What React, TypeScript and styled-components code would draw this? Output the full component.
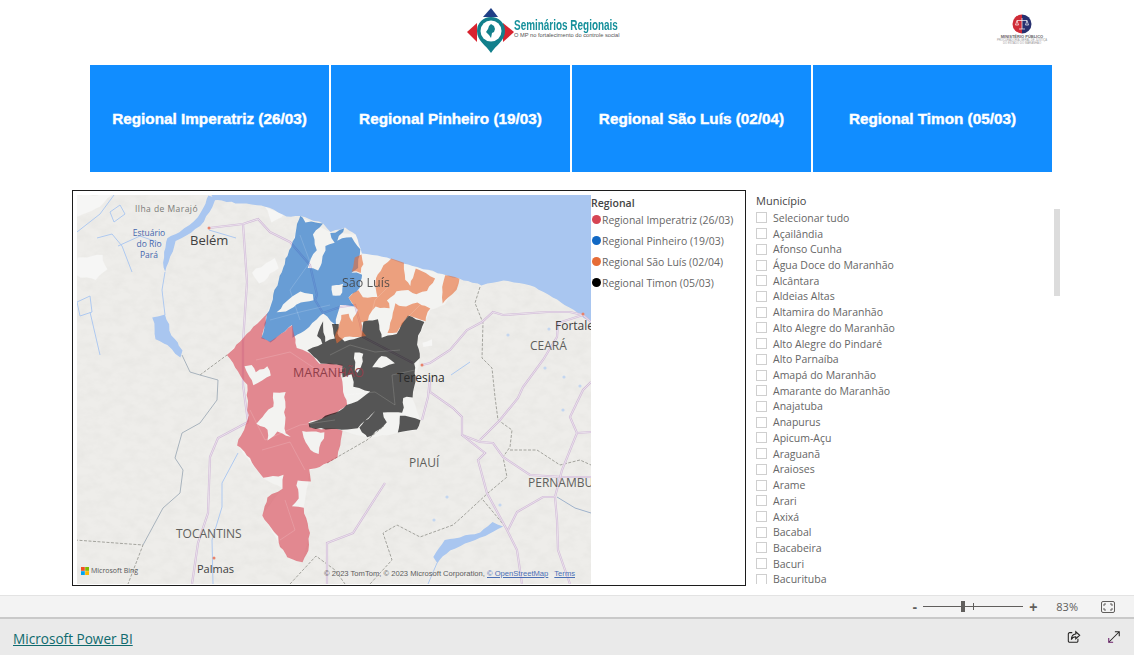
import React from 'react'
import styled, { createGlobalStyle } from 'styled-components'

const GlobalStyle = createGlobalStyle`
  html, body {
    margin: 0;
    padding: 0;
    background: #fff;
    font-family: "Open Sans", "Noto Sans", sans-serif;
  }
`

const Page = styled.div`
  width: 1134px;
  height: 655px;
  overflow: hidden;
  display: flex;
  flex-direction: column;
`

const Header = styled.header`
  height: 65px;
  display: flex;
  align-items: flex-start;
  padding-left: 466px;
  box-sizing: border-box;
`

const LogoBlock = styled.div`
  width: 154px;
  height: 50px;
  margin-top: 7px;
  display: flex;
  align-items: flex-start;

  & > svg {
    flex-shrink: 0;
  }
`

const LogoWords = styled.div`
  margin-top: 11px;
  display: flex;
  flex-direction: column;
`

const LogoTitle = styled.span`
  font-family: "Liberation Sans", sans-serif;
  font-size: 14px;
  font-weight: 700;
  line-height: 14px;
  color: #16909b;
  white-space: nowrap;
  transform: scaleX(0.71);
  transform-origin: left center;
`

const LogoSub = styled.span`
  font-family: "Liberation Sans", sans-serif;
  font-size: 5.7px;
  line-height: 7px;
  color: #555;
  white-space: nowrap;
`

const SealBlock = styled.div`
  width: 48px;
  margin: 14px 0 0 378px;
  display: flex;
  flex-direction: column;
  align-items: center;
`

const SealName = styled.span`
  font-family: "Liberation Sans", sans-serif;
  font-size: 4px;
  font-weight: 700;
  line-height: 5px;
  color: #666;
  white-space: nowrap;
`

const SealSmall = styled.span`
  font-family: "Liberation Sans", sans-serif;
  font-size: 2.8px;
  line-height: 3.3px;
  color: #999;
  white-space: nowrap;
`

const TabRow = styled.nav`
  margin-left: 90px;
  width: 962px;
  height: 107px;
  display: grid;
  grid-template-columns: repeat(4, 1fr);
  gap: 2px;
`

const TabButton = styled.button`
  border: 0;
  padding: 0;
  background: #118dff;
  color: #fff;
  font-family: "Liberation Sans", sans-serif;
  font-size: 15.3px;
  font-weight: 700;
  -webkit-text-stroke: 0.4px #fff;
`

const Main = styled.main`
  margin: 18px 0 0 72px;
  height: 396px;
  display: flex;
`

const MapVisual = styled.section`
  width: 674px;
  height: 396px;
  box-sizing: border-box;
  border: 1px solid #1c1c1c;
  padding: 4px 0 1px 4px;
  display: flex;
`

const MapFrame = styled.div`
  position: relative;
  width: 514px;
  height: 389px;
  overflow: hidden;
  background: #eeedea;
`

const MapSvg = styled.svg`
  display: block;
  width: 514px;
  height: 389px;
`

const MapLabel = styled.text<{ $size: number; $color: string; $spacing?: number }>`
  font-family: "Open Sans", sans-serif;
  font-size: ${(p) => p.$size}px;
  fill: ${(p) => p.$color};
  letter-spacing: ${(p) => p.$spacing ?? 0}px;
`

const BingMark = styled.div`
  position: absolute;
  left: 4px;
  bottom: 9px;
  display: flex;
  align-items: center;
  gap: 2px;
  font-family: "Open Sans", sans-serif;
  font-size: 7px;
  color: #555;
`

const Attribution = styled.div`
  position: absolute;
  left: 247px;
  bottom: 6px;
  display: flex;
  gap: 6px;
  font-family: "Liberation Sans", sans-serif;
  font-size: 7.6px;
  color: #5c5c5c;
  white-space: nowrap;

  & a {
    color: #4a6fb5;
    text-decoration: underline;
  }
`

const Legend = styled.div`
  display: flex;
  flex-direction: column;
`

const LegendTitle = styled.div`
  margin-top: 1px;
  height: 13px;
  font-size: 10.5px;
  font-weight: 600;
  line-height: 15px;
  color: #444;
`

const LegendItem = styled.div`
  height: 21px;
  display: flex;
  align-items: center;
  gap: 1px;
  font-size: 10.45px;
  color: #666;
  white-space: nowrap;
`

const LegendDot = styled.span<{ $color: string }>`
  width: 9px;
  height: 9px;
  margin-left: 1px;
  border-radius: 50%;
  background: ${(p) => p.$color};
`

const Slicer = styled.aside`
  margin-left: 10px;
  width: 308px;
  height: 394px;
  display: flex;
  flex-direction: column;
`

const SlicerTitle = styled.div`
  height: 20px;
  font-size: 11px;
  line-height: 22px;
  color: #444;
`

const SlicerBody = styled.div`
  flex: 1;
  min-height: 0;
  display: flex;
  justify-content: space-between;
`

const SlicerList = styled.div`
  flex: 1;
  overflow: hidden;
`

const SlicerRow = styled.div`
  height: 15.72px;
  display: flex;
  align-items: center;
  gap: 6px;
  font-size: 10.5px;
  color: #666;
  white-space: nowrap;
`

const Check = styled.span`
  width: 11px;
  height: 11px;
  box-sizing: border-box;
  border: 1px solid #cfcfcf;
  background: #fff;
`

const ScrollThumb = styled.div`
  width: 6px;
  height: 87px;
  margin-right: 4px;
  margin-top: -1px;
  background: #dcdcdc;
`

const ZoomBar = styled.div`
  margin-top: 9px;
  height: 24px;
  box-sizing: border-box;
  background: #f3f3f3;
  border-top: 1px solid #e3e3e3;
  border-bottom: 2px solid #c9c9c9;
  display: flex;
  align-items: center;
  justify-content: flex-end;
  padding-right: 19px;
  color: #605e5c;
`

const ZoomSign = styled.span`
  font-family: "Liberation Sans", sans-serif;
  font-size: 14px;
  line-height: 14px;
  font-weight: 700;
`

const ZoomTrack = styled.div`
  position: relative;
  width: 100px;
  height: 1px;
  margin: 0 6px;
  background: #605e5c;
`

const ZoomThumb = styled.span`
  position: absolute;
  left: 38px;
  top: -5px;
  width: 4px;
  height: 11px;
  background: #605e5c;
`

const ZoomTick = styled.span`
  position: absolute;
  left: 50px;
  top: -3px;
  width: 1px;
  height: 7px;
  background: #605e5c;
`

const ZoomValue = styled.span`
  margin: 0 23px 0 19px;
  font-size: 11px;
  color: #605e5c;
`

const Footer = styled.footer`
  flex: 1;
  background: #eaeaea;
  display: flex;
  align-items: center;
  padding: 0 13px;
  gap: 26px;
`

const BrandLink = styled.a`
  margin-right: auto;
  padding-top: 2px;
  font-size: 13.6px;
  color: #0f6a6e;
  text-decoration: underline;
`

const FooterIcon = styled.svg`
  display: block;
  width: 14px;
  height: 14px;
  fill: none;
  stroke-width: 1.2;
`

type Pt = [number, number]

// walks each edge in short steps with a small seeded jitter, so the outlines are not straight
const rough = (pts: Pt[], seed = 1, amp = 0.9): Pt[] => {
  let s = seed * 7919
  const rnd = () => {
    s = (s * 16807) % 2147483647
    return (s % 1000) / 1000 - 0.5
  }
  const out: Pt[] = []
  pts.forEach((a, i) => {
    const b = pts[(i + 1) % pts.length]
    const steps = Math.max(1, Math.round(Math.hypot(b[0] - a[0], b[1] - a[1]) / 5))
    for (let k = 0; k < steps; k++) {
      const t = k / steps
      out.push([a[0] + (b[0] - a[0]) * t + rnd() * amp * 2, a[1] + (b[1] - a[1]) * t + rnd() * amp * 2])
    }
  })
  return out
}

const toPoints = (pts: Pt[]) => pts.map((p) => `${p[0].toFixed(1)},${p[1].toFixed(1)}`).join(' ')
const toPath = (pts: Pt[]) => `M${toPoints(pts).replace(/ /g, ' L')}Z`
const toShape = (outer: Pt[], holes: Pt[][], seed: number) =>
  [outer, ...holes].map((p, i) => toPath(rough(p, seed + i))).join(' ')

const SEA: Pt[] = [
  [208, 188], [600, 188], [600, 330], [591, 323], [577, 312], [553, 297], [530, 285], [503, 280], [482, 285], [463, 280],
  [452, 277], [403, 263], [392, 259], [362, 253], [356, 235], [345, 228], [330, 232], [323, 223], [300, 216], [287, 217],
  [270, 208], [257, 205], [236, 203], [222, 201], [214, 200],
]

const ESTUARY: Pt[] = [
  [208, 195], [216, 198], [210, 212], [200, 226], [186, 236], [176, 241], [169, 262], [165, 272], [163, 262], [167, 238],
  [180, 232], [194, 222], [204, 208],
]

const LAKE_NORTH: Pt[] = [[153, 318], [165, 315], [172, 335], [182, 350], [180, 357], [168, 345], [156, 340]]
const LAKE_SOUTH: Pt[] = [[433, 557], [445, 540], [480, 533], [492, 522], [503, 527], [480, 538], [450, 550], [437, 563]]

const STATE: Pt[] = [
  [300, 216], [330, 232], [356, 235], [403, 263], [452, 277], [460, 279], [445, 305], [430, 310], [425, 322], [417, 340],
  [420, 358], [415, 382], [412, 397], [420, 420], [417, 430], [368, 438], [342, 430], [338, 457], [320, 467], [310, 470],
  [303, 513], [310, 533], [302, 562], [288, 558], [262, 515], [282, 488], [263, 478], [237, 445], [248, 420], [247, 385],
  [227, 355], [267, 313], [293, 242],
]

const PINHEIRO: Pt[] = [
  [300, 215], [306, 222], [323, 223], [313, 234], [316, 250], [307, 268], [318, 270], [322, 262], [326, 246], [334, 243],
  [330, 234], [345, 229], [337, 240], [352, 237], [360, 250], [358, 268], [352, 272], [362, 274], [360, 288], [348, 297],
  [354, 306], [340, 305], [335, 325], [323, 313], [305, 331], [293, 337], [292, 325], [270, 342], [262, 338], [267, 315],
  [277, 285], [283, 268], [293, 242],
]

const PINHEIRO_HOLES: Pt[][] = [
  [[277, 312], [287, 300], [300, 292], [313, 295], [313, 300], [300, 302], [290, 310]],
  [[331, 285], [344, 284], [340, 296], [332, 295]],
]

const IMPERATRIZ: Pt[] = [
  [267, 313], [262, 338], [270, 342], [292, 325], [297, 348], [307, 351], [320, 363], [342, 365], [342, 382], [347, 405],
  [335, 413], [308, 423], [310, 428], [342, 430], [338, 457], [320, 467], [310, 470], [310, 482], [297, 480], [298, 498],
  [292, 507], [303, 508], [310, 533], [308, 550], [302, 562], [288, 558], [278, 543], [278, 537], [262, 515], [268, 497],
  [282, 488], [283, 475], [263, 478], [247, 455], [237, 445], [248, 420], [247, 385], [227, 355],
]

const IMPERATRIZ_HOLES: Pt[][] = [
  [[273, 392], [285, 392], [285, 433], [290, 437], [278, 432], [268, 440], [268, 430], [257, 423], [265, 413], [273, 407]],
  [[302, 431], [325, 433], [318, 453], [310, 450], [303, 438]],
  [[245, 367], [252, 365], [255, 372], [268, 367], [270, 375], [253, 385]],
]

const TIMON: Pt[] = [
  [307, 350], [323, 343], [317, 337], [323, 322], [325, 342], [335, 338], [332, 325], [339, 324], [338, 337], [345, 342],
  [362, 337], [363, 322], [378, 320], [382, 338], [397, 333], [408, 315], [425, 322], [417, 340], [420, 358], [415, 363],
  [415, 382], [412, 397], [403, 398], [403, 413], [383, 412], [386, 423], [368, 438], [359, 428], [375, 412], [357, 428],
  [342, 430], [310, 428], [308, 423], [335, 413], [347, 405], [357, 402], [370, 392], [354, 387], [352, 375], [343, 377],
  [342, 365], [320, 363],
]

const TIMON_PIECE: Pt[] = [[400, 415], [420, 420], [417, 430], [398, 433]]

const TIMON_HOLES: Pt[][] = [
  [[355, 353], [363, 353], [362, 362], [358, 372], [354, 371]],
  [[378, 358], [386, 356], [394, 363], [382, 369], [372, 367]],
]

const SAO_LUIS: Pt[][] = [
  [[352, 272], [355, 257], [362, 255], [363, 265], [360, 272]],
  [[387, 262], [392, 259], [403, 263], [405, 280], [410, 286], [415, 268], [435, 278], [427, 290], [417, 295], [408, 290],
    [397, 292], [387, 300], [390, 308], [375, 307], [367, 320], [362, 322], [362, 330], [367, 335], [363, 337], [345, 336],
    [337, 343], [335, 337], [342, 315], [348, 313], [352, 322], [358, 310], [348, 297], [358, 290], [363, 297], [377, 297],
    [375, 283], [380, 270]],
  [[445, 276], [460, 278], [457, 290], [448, 297], [443, 303], [442, 293]],
  [[388, 333], [395, 303], [402, 307], [417, 303], [430, 308], [425, 321], [408, 315], [397, 333]],
]

const LAND_WHITE: Pt[][] = [
  [[77, 258], [102, 255], [107, 270], [95, 280], [77, 276]],
  [[252, 272], [275, 258], [278, 268], [260, 284]],
  [[265, 206], [285, 214], [272, 222]],
  [[422, 342], [432, 340], [432, 346], [424, 347]],
  [[77, 195], [112, 195], [100, 207], [77, 216]],
]

const ROADS: Pt[][] = [
  [[209, 228], [243, 224], [258, 219], [270, 232], [290, 242], [310, 265], [317, 295], [315, 300], [323, 313], [340, 307], [355, 305], [360, 323], [363, 337], [413, 363]],
  [[243, 224], [247, 282], [243, 342], [243, 385], [248, 422]],
  [[248, 422], [218, 438], [210, 457], [208, 513], [198, 543], [192, 584]],
  [[422, 365], [430, 363], [450, 350], [467, 330], [482, 322], [493, 312], [503, 315], [547, 312], [570, 312], [583, 315], [591, 322]],
  [[583, 315], [558, 323], [557, 337], [543, 360], [523, 387], [518, 398], [500, 420], [480, 440]],
  [[430, 377], [430, 392], [453, 408], [462, 417], [462, 435], [480, 442], [493, 443], [503, 457], [530, 475], [563, 477], [591, 477]],
  [[430, 377], [428, 397], [422, 420]],
  [[462, 435], [485, 453], [478, 460], [487, 493], [507, 530], [517, 550], [522, 584]],
  [[508, 530], [517, 512], [543, 497], [555, 497], [562, 470], [577, 433], [570, 417], [583, 390], [591, 382]],
  [[555, 497], [557, 520], [558, 550], [570, 584]],
  [[577, 433], [591, 432]],
  [[327, 584], [327, 543], [353, 533], [385, 483]],
]

const RIVERS: Pt[][] = [
  [[165, 272], [162, 290], [165, 315]],
  [[238, 453], [222, 483], [222, 507], [212, 540], [213, 584]],
  [[77, 232], [100, 214], [114, 195]],
  [[110, 212], [120, 205], [125, 214], [114, 222], [110, 212]],
  [[97, 238], [112, 234], [122, 246], [132, 272]],
  [[118, 246], [140, 236], [160, 243]],
  [[77, 302], [90, 296], [92, 312], [80, 316], [77, 302]],
  [[90, 312], [100, 355]],
  [[209, 230], [236, 238]],
  [[437, 563], [428, 584]],
  [[451, 375], [470, 362]],
]

const TOCANTINS_RIVER: Pt[] = [
  [182, 355], [190, 372], [200, 375], [218, 380], [217, 400], [200, 423], [182, 433], [175, 458], [183, 470], [180, 493], [163, 508], [143, 545],
]

const PARNAIBA_RIVER: Pt[] = [[557, 497], [575, 508], [591, 513]]

const BORDERS: Pt[][] = [
  [[200, 375], [227, 355]],
  [[75, 540], [143, 545], [128, 584]],
  [[327, 463], [367, 440], [384, 426]],
  [[290, 584], [316, 556], [335, 570], [345, 584]],
  [[480, 287], [475, 303], [483, 323], [482, 358], [492, 368], [495, 397], [498, 420], [512, 430], [510, 447], [503, 457], [507, 477], [488, 493], [462, 517], [453, 525], [420, 537], [397, 525], [383, 533], [392, 560], [370, 584]],
  [[510, 450], [537, 450], [560, 465], [580, 460], [591, 465]],
  [[483, 500], [508, 530]],
]

const INNER_LINES: Pt[][] = [
  [[300, 235], [310, 262], [290, 290], [300, 320]],
  [[270, 320], [300, 312], [330, 305]],
  [[256, 360], [290, 352], [320, 372], [345, 368]],
  [[250, 410], [265, 440], [300, 425], [335, 420]],
  [[262, 450], [290, 442], [305, 470]],
  [[285, 500], [295, 530], [280, 540]],
  [[330, 355], [350, 345], [375, 352], [400, 350]],
  [[345, 395], [375, 392], [395, 405], [392, 375], [415, 370]],
  [[390, 285], [375, 300], [370, 320]],
  [[405, 320], [420, 305]],
]

const PONDS: Pt[] = [[508, 335], [549, 329], [545, 368], [564, 377], [580, 386], [563, 410], [447, 497], [500, 505], [434, 520]]

const REGIONS = [
  { name: 'Regional Imperatriz (26/03)', color: '#d64554' },
  { name: 'Regional Pinheiro (19/03)', color: '#1168c4' },
  { name: 'Regional São Luís (02/04)', color: '#e66c37' },
  { name: 'Regional Timon (05/03)', color: '#000000' },
]

const CITIES = [
  'Selecionar tudo', 'Açailândia', 'Afonso Cunha', 'Água Doce do Maranhão', 'Alcântara', 'Aldeias Altas',
  'Altamira do Maranhão', 'Alto Alegre do Maranhão', 'Alto Alegre do Pindaré', 'Alto Parnaíba', 'Amapá do Maranhão',
  'Amarante do Maranhão', 'Anajatuba', 'Anapurus', 'Apicum-Açu', 'Araguanã', 'Araioses', 'Arame', 'Arari', 'Axixá',
  'Bacabal', 'Bacabeira', 'Bacuri', 'Bacurituba',
]

const SeminarLogo = () => (
  <svg width="48" height="48" viewBox="466 7 48 48">
    <polygon points="483,17 491,8 498,17" fill="#1f3f86" />
    <polygon points="467,32 477,23 477,42" fill="#d8232f" />
    <polygon points="503,23 514,32 503,42" fill="#d8232f" />
    <path d="M491 53 C486 45 477 41 477 31 a14 14 0 0 1 28 0 C505 41 496 45 491 53Z" fill="#12808c" />
    <circle cx="491" cy="31" r="10.5" fill="#fff" />
    <path d="M491 24 l3 2 l1 3 l-1 3 l-2 1 l-1 5 l-2 -3 l-3 -3 l2 -3 l1 -3Z" fill="#12808c" />
  </svg>
)

const SealLogo = () => (
  <svg width="20" height="20" viewBox="0 0 20 20">
    <path d="M10 0.5 a9.5 9.5 0 0 0 0 19Z" fill="#cf2b37" />
    <path d="M10 0.5 a9.5 9.5 0 0 1 0 19Z" fill="#27306f" />
    <path d="M10 4 V15 M5 6.5 H15 M7 15 H13 M5 6.5 L3.5 11 H6.5Z M15 6.5 L13.5 11 H16.5Z" stroke="#fff" strokeWidth="0.7" fill="none" />
  </svg>
)

const App = () => (
  <Page>
    <GlobalStyle />
    <Header>
      <LogoBlock>
        <SeminarLogo />
        <LogoWords>
          <LogoTitle>Seminários Regionais</LogoTitle>
          <LogoSub>O MP no fortalecimento do controle social</LogoSub>
        </LogoWords>
      </LogoBlock>
      <SealBlock>
        <SealLogo />
        <SealName>MINISTÉRIO PÚBLICO</SealName>
        <SealSmall>PROCURADORIA-GERAL DE JUSTIÇA</SealSmall>
        <SealSmall>DO ESTADO DO MARANHÃO</SealSmall>
      </SealBlock>
    </Header>

    <TabRow>
      {REGIONS.map((r) => (
        <TabButton key={r.name}>{r.name}</TabButton>
      ))}
    </TabRow>

    <Main>
      <MapVisual>
        <MapFrame>
          <MapSvg viewBox="77 195 514 389">
            <defs>
              <filter id="relief" x="0" y="0" width="100%" height="100%">
                <feTurbulence type="fractalNoise" baseFrequency="0.08 0.12" numOctaves="4" seed="7" />
                <feColorMatrix values="0 0 0 0 0.5  0 0 0 0 0.5  0 0 0 0 0.47  0.2 0 0 0 -0.07" />
              </filter>
              <filter id="soft">
                <feGaussianBlur stdDeviation="0.4" />
              </filter>
            </defs>
            <rect x="77" y="195" width="514" height="389" fill="#eeedea" />
            <rect x="77" y="195" width="514" height="389" filter="url(#relief)" />
            <g filter="url(#soft)">
              {LAND_WHITE.map((p, i) => (
                <polygon key={i} points={toPoints(rough(p, i + 3))} fill="#f6f6f5" />
              ))}
              <polygon points={toPoints(rough(STATE, 11, 0.5))} fill="#f3f3f1" />
              <polygon points={toPoints(rough(SEA, 5, 0.6))} fill="#a9c6f0" />
              <polygon points={toPoints(rough(ESTUARY, 6, 0.6))} fill="#a9c6f0" />
              <polygon points={toPoints(rough(LAKE_NORTH, 8))} fill="#a9c6f0" />
              <polygon points={toPoints(rough(LAKE_SOUTH, 9, 0.7))} fill="#a9c6f0" />
              {PONDS.map((p, i) => (
                <circle key={i} cx={p[0]} cy={p[1]} r="1.6" fill="#c3d6f0" />
              ))}
              {RIVERS.map((p, i) => (
                <polyline key={i} points={toPoints(p)} fill="none" stroke="#aec9f0" strokeWidth="1" />
              ))}
              {BORDERS.map((p, i) => (
                <polyline key={i} points={toPoints(p)} fill="none" stroke="#a3a39d" strokeWidth="1" strokeDasharray="3 1.5" />
              ))}
              <polyline points={toPoints(TOCANTINS_RIVER)} fill="none" stroke="#a8b3bd" strokeWidth="1" />
              <polyline points={toPoints(PARNAIBA_RIVER)} fill="none" stroke="#9fb2cb" strokeWidth="1" />
              {ROADS.map((p, i) => (
                <g key={i}>
                  <polyline points={toPoints(p)} fill="none" stroke="#d2bcd8" strokeWidth="2.2" />
                  <polyline points={toPoints(p)} fill="none" stroke="#f3eff4" strokeWidth="0.7" />
                </g>
              ))}
              <path d={toShape(PINHEIRO, PINHEIRO_HOLES, 21)} fill="#1168c4" fillRule="evenodd" opacity="0.62" />
              <path d={toShape(IMPERATRIZ, IMPERATRIZ_HOLES, 31)} fill="#d64554" fillRule="evenodd" opacity="0.62" />
              <path d={toShape(TIMON, TIMON_HOLES, 41)} fill="#000" fillRule="evenodd" opacity="0.65" />
              <polygon points={toPoints(rough(TIMON_PIECE, 47))} fill="#000" opacity="0.65" />
              {SAO_LUIS.map((p, i) => (
                <polygon key={i} points={toPoints(rough(p, 51 + i))} fill="#e66c37" opacity="0.62" />
              ))}
              {INNER_LINES.map((p, i) => (
                <polyline key={i} points={toPoints(p)} fill="none" stroke="#fff" strokeWidth="0.5" opacity="0.3" />
              ))}
            </g>
            <MapLabel x="135" y="212" $size={8.5} $color="#7b7b78" $spacing={0.45}>Ilha de Marajó</MapLabel>
            <MapLabel x="149" y="236" $size={8.5} $color="#4566ad" textAnchor="middle">Estuário</MapLabel>
            <MapLabel x="149" y="247" $size={8.5} $color="#4566ad" textAnchor="middle">do Rio</MapLabel>
            <MapLabel x="149" y="258" $size={8.5} $color="#4566ad" textAnchor="middle">Pará</MapLabel>
            <MapLabel x="190" y="245" $size={13} $color="#404040">Belém</MapLabel>
            <MapLabel x="342" y="287" $size={12.5} $color="#404040" opacity="0.85">São Luís</MapLabel>
            <MapLabel x="293" y="377" $size={12.5} $color="#8f3f4a">MARANHÃO</MapLabel>
            <MapLabel x="397" y="382" $size={12} $color="#2a2a2a">Teresina</MapLabel>
            <MapLabel x="555" y="330" $size={12} $color="#404040">Fortaleza</MapLabel>
            <MapLabel x="530" y="350" $size={12} $color="#605f5c">CEARÁ</MapLabel>
            <MapLabel x="409" y="467" $size={12} $color="#605f5c">PIAUÍ</MapLabel>
            <MapLabel x="528" y="487" $size={12} $color="#605f5c">PERNAMBUCO</MapLabel>
            <MapLabel x="176" y="538" $size={12} $color="#605f5c">TOCANTINS</MapLabel>
            <MapLabel x="197" y="573" $size={11} $color="#404040">Palmas</MapLabel>
            <circle cx="209" cy="228" r="1.5" fill="#e8826a" />
            <circle cx="422" cy="365" r="1.5" fill="#e8826a" />
            <circle cx="214" cy="558" r="1.5" fill="#e8826a" />
            <circle cx="583" cy="314" r="1.5" fill="#e8826a" />
          </MapSvg>
          <BingMark>
            <svg width="8" height="8" viewBox="0 0 8 8">
              <rect width="3.8" height="3.8" fill="#f25022" />
              <rect x="4.2" width="3.8" height="3.8" fill="#7fba00" />
              <rect y="4.2" width="3.8" height="3.8" fill="#00a4ef" />
              <rect x="4.2" y="4.2" width="3.8" height="3.8" fill="#ffb900" />
            </svg>
            Microsoft Bing
          </BingMark>
          <Attribution>
            <span>
              © 2023 TomTom, © 2023 Microsoft Corporation, <a>© OpenStreetMap</a>
            </span>
            <a>Terms</a>
          </Attribution>
        </MapFrame>
        <Legend>
          <LegendTitle>Regional</LegendTitle>
          {REGIONS.map((r) => (
            <LegendItem key={r.name}>
              <LegendDot $color={r.color} />
              {r.name}
            </LegendItem>
          ))}
        </Legend>
      </MapVisual>

      <Slicer>
        <SlicerTitle>Município</SlicerTitle>
        <SlicerBody>
          <SlicerList>
            {CITIES.map((c) => (
              <SlicerRow key={c}>
                <Check />
                {c}
              </SlicerRow>
            ))}
          </SlicerList>
          <ScrollThumb />
        </SlicerBody>
      </Slicer>
    </Main>

    <ZoomBar>
      <ZoomSign>-</ZoomSign>
      <ZoomTrack>
        <ZoomThumb />
        <ZoomTick />
      </ZoomTrack>
      <ZoomSign>+</ZoomSign>
      <ZoomValue>83%</ZoomValue>
      <svg width="14" height="12" viewBox="0 0 14 12" fill="none" stroke="#605e5c">
        <rect x="0.5" y="0.5" width="13" height="11" rx="1.5" />
        <path d="M3 5 V3 H5 M9 3 H11 V5 M11 7 V9 H9 M5 9 H3 V7" />
      </svg>
    </ZoomBar>

    <Footer>
      <BrandLink>Microsoft Power BI</BrandLink>
      <FooterIcon viewBox="0 0 16 16" stroke="#252423">
        <path d="M6 3 H3 a1.5 1.5 0 0 0 -1.5 1.5 V12.5 A1.5 1.5 0 0 0 3 14 H11 a1.5 1.5 0 0 0 1.5 -1.5 V10" />
        <path d="M10 2 L14.5 6 L10 10 V7.6 C7.5 7.6 5.8 8.6 5 11 C5 7.5 6.8 5 10 4.6Z" />
      </FooterIcon>
      <FooterIcon viewBox="0 0 16 16" stroke="#252423">
        <path d="M2 14 L14 2 M9 2 H14 V7" />
        <path d="M2 9 V14 H7" stroke="#6b1f6b" />
      </FooterIcon>
    </Footer>
  </Page>
)

export default App
